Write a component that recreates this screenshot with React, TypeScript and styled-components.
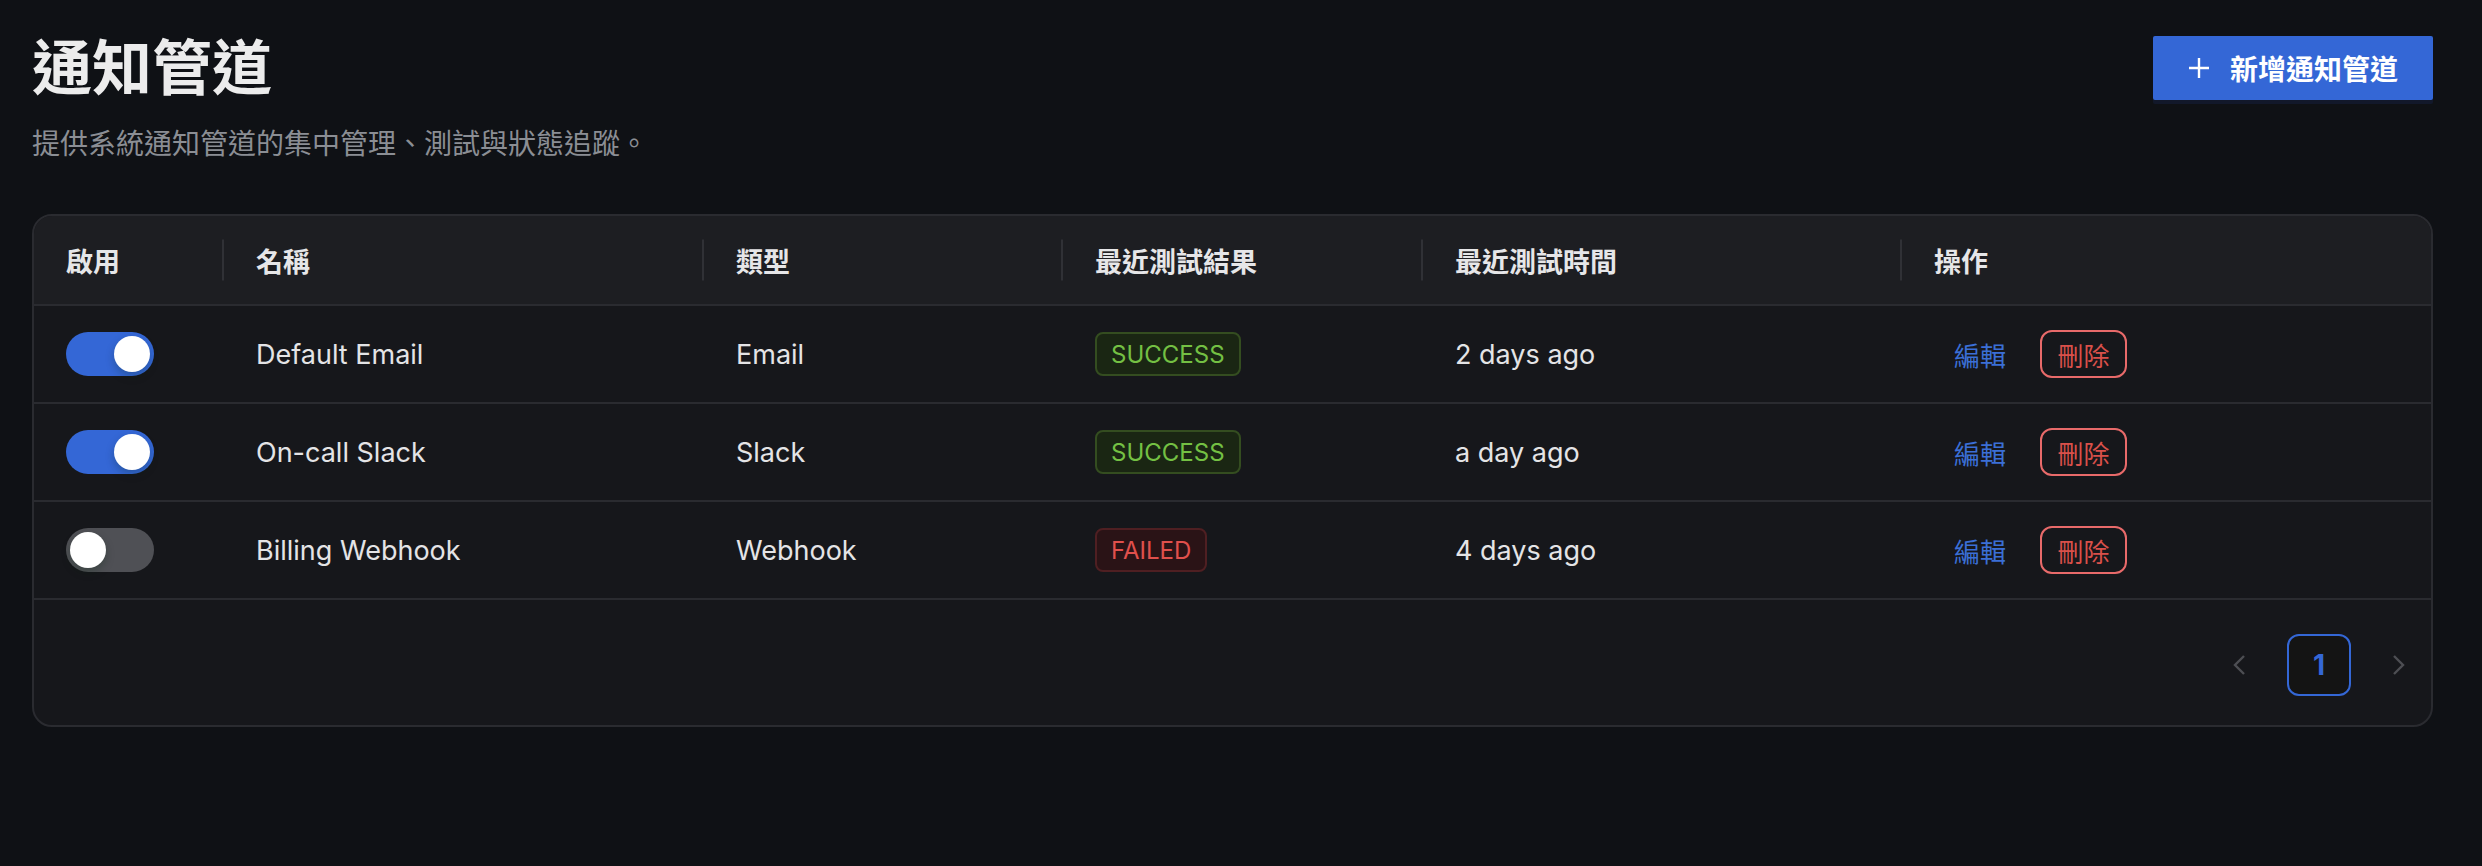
import React, { useState } from 'react';
import styled, { createGlobalStyle } from 'styled-components';

interface Channel {
  id: number;
  enabled: boolean;
  name: string;
  type: string;
  result: 'SUCCESS' | 'FAILED';
  testedAt: string;
}

const channels: Channel[] = [
  { id: 1, enabled: true, name: 'Default Email', type: 'Email', result: 'SUCCESS', testedAt: '2 days ago' },
  { id: 2, enabled: true, name: 'On-call Slack', type: 'Slack', result: 'SUCCESS', testedAt: 'a day ago' },
  { id: 3, enabled: false, name: 'Billing Webhook', type: 'Webhook', result: 'FAILED', testedAt: '4 days ago' },
];

const columns = ['啟用', '名稱', '類型', '最近測試結果', '最近測試時間', '操作'];
const widths = [190, 480, 359, 360, 479, 529];

const GlobalStyle = createGlobalStyle`
  html, body {
    margin: 0;
    background: #0f1115;
  }
  body {
    font-family: Inter, "Noto Sans CJK TC", sans-serif;
    color: #e4e4e6;
  }
`;

const App: React.FC = () => {
  const [rows, setRows] = useState<Channel[]>(channels);

  const toggle = (id: number) => {
    setRows(rows.map((r) => (r.id === id ? { ...r, enabled: !r.enabled } : r)));
  };

  return (
    <>
      <GlobalStyle />
      <StyledPage>
        <StyledHeader>
          <div>
            <StyledTitle>通知管道</StyledTitle>
            <StyledSubtitle>提供系統通知管道的集中管理、測試與狀態追蹤。</StyledSubtitle>
          </div>
          <StyledPrimaryButton>
            <svg width="22" height="22" viewBox="0 0 22 22">
              <path d="M11 1v20M1 11h20" stroke="#fff" strokeWidth="2.4" fill="none" />
            </svg>
            新增通知管道
          </StyledPrimaryButton>
        </StyledHeader>

        <StyledCard>
          <StyledTable>
            <colgroup>
              {widths.map((w, i) => (
                <col key={i} style={{ width: w }} />
              ))}
            </colgroup>
            <thead>
              <tr>
                {columns.map((c, i) => (
                  <StyledTh key={c} $divider={i < columns.length - 1}>
                    {c}
                  </StyledTh>
                ))}
              </tr>
            </thead>
            <tbody>
              {rows.map((r) => (
                <tr key={r.id}>
                  <StyledTd>
                    <StyledSwitch $on={r.enabled} onClick={() => toggle(r.id)}>
                      <StyledKnob />
                    </StyledSwitch>
                  </StyledTd>
                  <StyledTd>{r.name}</StyledTd>
                  <StyledTd>{r.type}</StyledTd>
                  <StyledTd>
                    <StyledTag $ok={r.result === 'SUCCESS'}>{r.result}</StyledTag>
                  </StyledTd>
                  <StyledTd>{r.testedAt}</StyledTd>
                  <StyledTd>
                    <StyledActions>
                      <StyledLinkButton>編輯</StyledLinkButton>
                      <StyledDangerButton>刪除</StyledDangerButton>
                    </StyledActions>
                  </StyledTd>
                </tr>
              ))}
            </tbody>
          </StyledTable>

          <StyledPagination>
            <StyledPageArrow>
              <svg width="16" height="22" viewBox="0 0 16 22">
                <path d="M13 2L4 11l9 9" stroke="currentColor" strokeWidth="2.4" fill="none" />
              </svg>
            </StyledPageArrow>
            <StyledPageItem>1</StyledPageItem>
            <StyledPageArrow>
              <svg width="16" height="22" viewBox="0 0 16 22">
                <path d="M3 2l9 9-9 9" stroke="currentColor" strokeWidth="2.4" fill="none" />
              </svg>
            </StyledPageArrow>
          </StyledPagination>
        </StyledCard>
      </StyledPage>
    </>
  );
};

const StyledPage = styled.div`
  padding: 32px 49px 0 32px;
`;

const StyledHeader = styled.div`
  display: flex;
  justify-content: space-between;
  align-items: flex-start;
`;

const StyledTitle = styled.h1`
  margin: 0;
  font-size: 60px;
  line-height: 72px;
  font-weight: 700;
  color: #ececec;
`;

const StyledSubtitle = styled.p`
  margin: 20px 0 0;
  font-size: 28px;
  line-height: 40px;
  color: #8b8e94;
`;

const StyledPrimaryButton = styled.button`
  margin-top: 4px;
  height: 64px;
  width: 280px;
  display: flex;
  align-items: center;
  justify-content: center;
  gap: 20px;
  border: none;
  border-radius: 2px;
  background: #3467d6;
  box-shadow: 0 4px 0 rgba(40, 80, 200, 0.12);
  color: #fff;
  font-family: inherit;
  font-size: 28px;
  font-weight: 700;
  cursor: pointer;
`;

const StyledCard = styled.div`
  margin-top: 50px;
  border: 2px solid #2a2b30;
  border-radius: 20px;
  background: #16171b;
  overflow: hidden;
`;

const StyledTable = styled.table`
  width: 100%;
  table-layout: fixed;
  border-collapse: collapse;
`;

const StyledTh = styled.th<{ $divider: boolean }>`
  position: relative;
  height: 88px;
  padding: 0 0 0 32px;
  text-align: left;
  background: #1d1e22;
  border-bottom: 2px solid #2a2b30;
  font-size: 27px;
  font-weight: 700;
  color: #e6e6e8;

  &::before {
    content: '';
    display: ${(p) => (p.$divider ? 'block' : 'none')};
    position: absolute;
    right: 0;
    top: 50%;
    width: 2px;
    height: 41px;
    transform: translateY(-50%);
    background: #303136;
  }
`;

const StyledTd = styled.td`
  height: 96px;
  padding: 0 0 0 32px;
  border-bottom: 2px solid #2a2b30;
  font-size: 27px;
  color: #e4e4e6;
  vertical-align: middle;
`;

const StyledSwitch = styled.div<{ $on: boolean }>`
  width: 88px;
  height: 44px;
  box-sizing: border-box;
  padding: 4px;
  border-radius: 22px;
  display: flex;
  justify-content: ${(p) => (p.$on ? 'flex-end' : 'flex-start')};
  background: ${(p) => (p.$on ? '#3467d6' : '#4f5055')};
  cursor: pointer;
`;

const StyledKnob = styled.div`
  width: 36px;
  height: 36px;
  border-radius: 50%;
  background: #fff;
  box-shadow: 0 4px 8px rgba(0, 35, 11, 0.25);
`;

const StyledTag = styled.span<{ $ok: boolean }>`
  display: inline-flex;
  align-items: center;
  height: 44px;
  box-sizing: border-box;
  padding: 0 14px;
  border-radius: 8px;
  border: 2px solid ${(p) => (p.$ok ? '#344d20' : '#4f1f22')};
  background: ${(p) => (p.$ok ? '#1a2613' : '#2a1316')};
  color: ${(p) => (p.$ok ? '#74c043' : '#e0504c')};
  font-size: 24px;
`;

const StyledActions = styled.div`
  display: flex;
  align-items: center;
  gap: 14px;
`;

const StyledLinkButton = styled.button`
  border: none;
  background: none;
  padding: 0 20px;
  font-family: inherit;
  font-size: 26px;
  color: #3b6fd6;
  cursor: pointer;
`;

const StyledDangerButton = styled.button`
  height: 48px;
  width: 87px;
  box-sizing: border-box;
  border: 2px solid #e86a6a;
  border-radius: 12px;
  background: transparent;
  padding: 0;
  font-family: inherit;
  font-size: 26px;
  color: #d9504a;
  cursor: pointer;
`;

const StyledPagination = styled.div`
  display: flex;
  justify-content: flex-end;
  align-items: center;
  gap: 16px;
  padding: 33px 0 28px;
`;

const StyledPageArrow = styled.div`
  width: 64px;
  height: 64px;
  display: flex;
  align-items: center;
  justify-content: center;
  color: #4d4e53;
`;

const StyledPageItem = styled.div`
  width: 64px;
  height: 62px;
  box-sizing: border-box;
  display: flex;
  align-items: center;
  justify-content: center;
  border: 2px solid #3467d6;
  border-radius: 12px;
  background: #141414;
  color: #3467d6;
  font-size: 28px;
  font-weight: 700;
`;

export default App;
